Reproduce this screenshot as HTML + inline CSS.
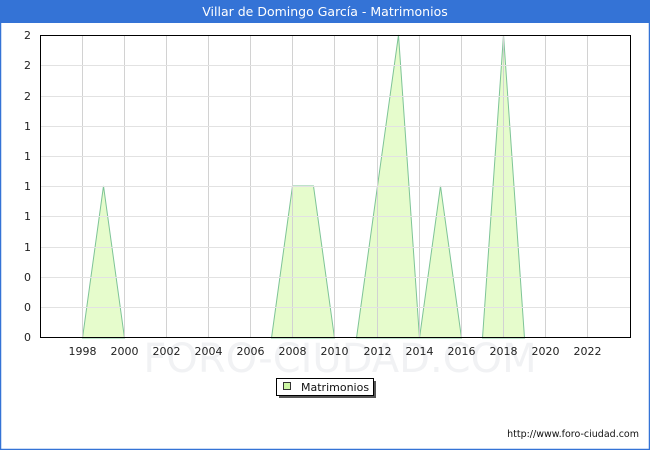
<!DOCTYPE html>
<html><head><meta charset="utf-8"><style>
html,body{margin:0;padding:0;background:#fff}
svg{display:block;font-family:"DejaVu Sans","Liberation Sans",sans-serif}
</style></head><body>
<svg width="650" height="450" viewBox="0 0 650 450" xmlns="http://www.w3.org/2000/svg">
<rect x="0" y="0" width="650" height="450" fill="#fff"/>
<rect x="0.5" y="0.5" width="649" height="449" fill="none" stroke="#3473d6" stroke-width="1.5"/>
<rect x="0" y="0" width="650" height="23" fill="#3473d6"/>
<text x="325" y="16" font-size="12.5" fill="#fff" text-anchor="middle">Villar de Domingo García - Matrimonios</text>
<text x="340" y="372" font-size="40" fill="#f1f2f4" text-anchor="middle">FORO-CIUDAD.COM</text>
<g fill="#e6fccc" stroke="#7ec497" stroke-width="1">
<polygon points="82.5,338 103.5,186 124.5,338"/>
<polygon points="271.5,338 292.5,186 313.5,186 334.5,338"/>
<polygon points="356.5,338 377.5,186 398.5,35 419.5,338"/>
<polygon points="419.5,338 440.5,186 461.5,338"/>
<polygon points="482.5,338 503.5,35 524.5,338"/>
</g>
<g stroke="#d2d2d2" stroke-width="1">
<line x1="82.5" y1="35" x2="82.5" y2="338"/><line x1="124.5" y1="35" x2="124.5" y2="338"/>
<line x1="166.5" y1="35" x2="166.5" y2="338"/><line x1="208.5" y1="35" x2="208.5" y2="338"/>
<line x1="250.5" y1="35" x2="250.5" y2="338"/><line x1="292.5" y1="35" x2="292.5" y2="338"/>
<line x1="334.5" y1="35" x2="334.5" y2="338"/><line x1="377.5" y1="35" x2="377.5" y2="338"/>
<line x1="419.5" y1="35" x2="419.5" y2="338"/><line x1="461.5" y1="35" x2="461.5" y2="338"/>
<line x1="503.5" y1="35" x2="503.5" y2="338"/><line x1="545.5" y1="35" x2="545.5" y2="338"/>
<line x1="587.5" y1="35" x2="587.5" y2="338"/>
</g>
<g stroke="#e2e2e2" stroke-width="1">
<line x1="40" y1="65.5" x2="630" y2="65.5"/><line x1="40" y1="96.5" x2="630" y2="96.5"/>
<line x1="40" y1="126.5" x2="630" y2="126.5"/><line x1="40" y1="156.5" x2="630" y2="156.5"/>
<line x1="40" y1="186.5" x2="630" y2="186.5"/><line x1="40" y1="216.5" x2="630" y2="216.5"/>
<line x1="40" y1="247.5" x2="630" y2="247.5"/><line x1="40" y1="277.5" x2="630" y2="277.5"/>
<line x1="40" y1="307.5" x2="630" y2="307.5"/>
</g>
<rect x="40.5" y="35.5" width="590" height="302" fill="none" stroke="#000" stroke-width="1"/>
<g font-size="11" fill="#222" text-anchor="end">
<text x="31" y="39">2</text><text x="31" y="69">2</text><text x="31" y="100">2</text>
<text x="31" y="130">1</text><text x="31" y="160">1</text><text x="31" y="190">1</text>
<text x="31" y="220">1</text><text x="31" y="251">1</text><text x="31" y="281">0</text>
<text x="31" y="311">0</text><text x="31" y="341">0</text>
</g>
<g font-size="11" fill="#222" text-anchor="middle">
<text x="82.5" y="355">1998</text><text x="124.5" y="355">2000</text><text x="166.5" y="355">2002</text>
<text x="208.5" y="355">2004</text><text x="250.5" y="355">2006</text><text x="292.5" y="355">2008</text>
<text x="334.5" y="355">2010</text><text x="377.5" y="355">2012</text><text x="419.5" y="355">2014</text>
<text x="461.5" y="355">2016</text><text x="503.5" y="355">2018</text><text x="545.5" y="355">2020</text>
<text x="587.5" y="355">2022</text>
</g>
<rect x="279" y="381" width="97" height="17" fill="#555"/>
<rect x="276.5" y="378.5" width="97" height="17" fill="#fff" stroke="#000"/>
<rect x="283.5" y="382.5" width="7" height="7" fill="#cdf7a4" stroke="#333"/>
<text x="301" y="391" font-size="11" fill="#111">Matrimonios</text>
<text x="639" y="437" font-size="9.5" fill="#111" text-anchor="end">http://www.foro-ciudad.com</text>
</svg>
</body></html>
